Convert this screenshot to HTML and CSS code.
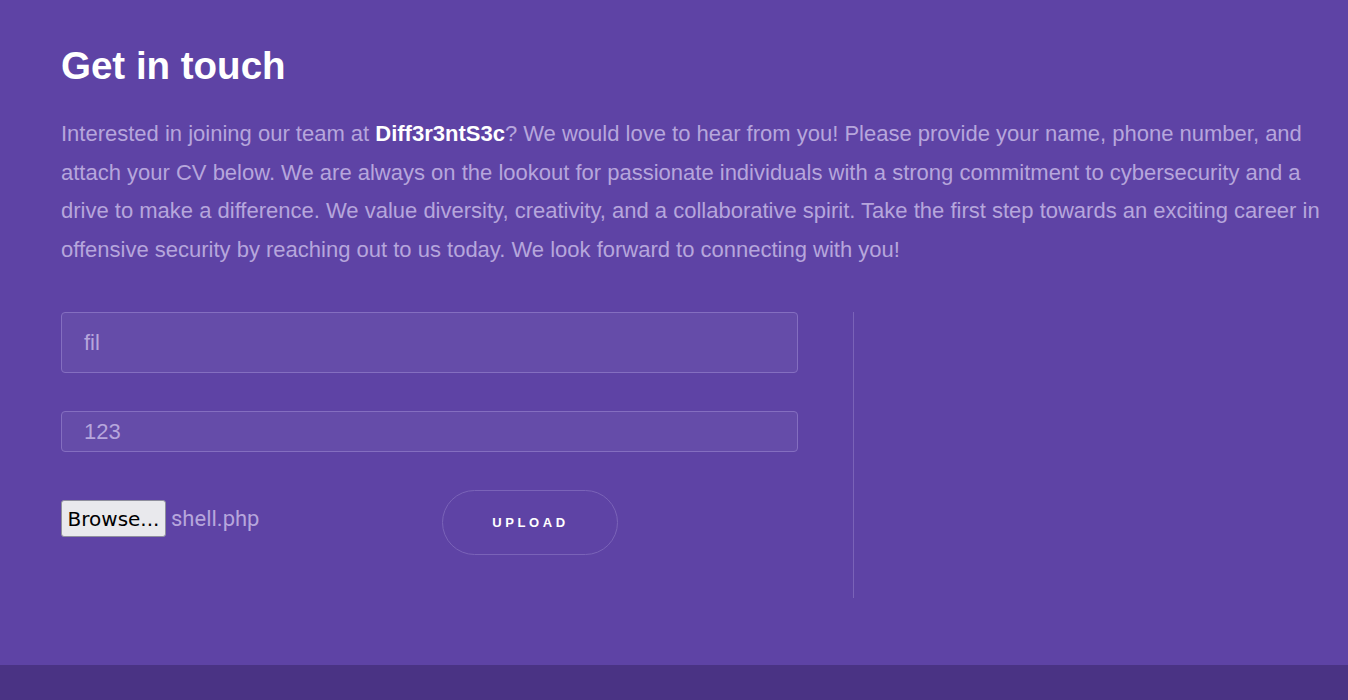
FILE: index.html
```html
<!DOCTYPE html>
<html>
<head>
<meta charset="utf-8">
<link rel="stylesheet" href="styles.css">
</head>
<body>
<section class="contact">
  <h1 class="title">Get in touch</h1>
  <p class="intro">Interested in joining our team at <strong>Diff3r3ntS3c</strong>? We would love to hear from you! Please provide your name, phone number, and attach your CV below. We are always on the lookout for passionate individuals with a strong commitment to cybersecurity and a drive to make a difference. We value diversity, creativity, and a collaborative spirit. Take the first step towards an exciting career in offensive security by reaching out to us today. We look forward to connecting with you!</p>
  <div class="row">
    <form class="form">
      <div class="field field-tall">fil</div>
      <div class="field field-short">123</div>
      <div class="actions">
        <div class="file">
          <span class="browse">Browse...</span>
          <span class="filename">shell.php</span>
        </div>
        <span class="upload">UPLOAD</span>
      </div>
    </form>
    <div class="divider"></div>
  </div>
</section>
<footer class="footer"></footer>
</body>
</html>
```
FILE: styles.css
```css
html, body {
  margin: 0;
  padding: 0;
  background: #5e43a5;
  font-family: "Liberation Sans", Arial, sans-serif;
}
.contact {
  padding: 43px 28px 0 61px;
  height: 622px;
  box-sizing: border-box;
}
.title {
  margin: 0;
  font-size: 38.5px;
  line-height: 46px;
  font-weight: 700;
  color: #ffffff;
}
.intro {
  margin: 26px 0 0 0;
  font-size: 22px;
  line-height: 38.5px;
  color: #b6a6dc;
}
.intro strong {
  color: #ffffff;
  font-weight: 700;
}
.row {
  display: flex;
  margin-top: 43px;
}
.form {
  width: 737px;
  display: flex;
  flex-direction: column;
}
.field {
  box-sizing: border-box;
  background: #654ca9;
  border: 1px solid #846ec0;
  border-radius: 4px;
  padding-left: 22px;
  font-size: 22px;
  color: #b6a6dc;
  display: flex;
  align-items: center;
}
.field-tall {
  height: 61px;
}
.field-short {
  height: 41px;
  margin-top: 38px;
}
.actions {
  display: flex;
  align-items: flex-start;
  margin-top: 38px;
}
.file {
  display: flex;
  align-items: center;
  width: 381px;
  margin-top: 10px;
}
.browse {
  box-sizing: border-box;
  height: 37px;
  width: 105px;
  background: #e9e9ed;
  border: 1px solid #8f8f9d;
  border-radius: 3px;
  font-family: "DejaVu Sans", sans-serif;
  font-size: 20px;
  color: #000000;
  display: flex;
  align-items: center;
  justify-content: center;
}
.filename {
  margin-left: 5px;
  font-size: 22px;
  color: #b6a6dc;
  font-family: "Roboto", "Liberation Sans", sans-serif;
}
.upload {
  box-sizing: border-box;
  width: 176px;
  height: 65px;
  border: 1px solid #7a63b8;
  border-radius: 33px;
  color: #ffffff;
  font-size: 13px;
  font-weight: 700;
  letter-spacing: 3.6px;
  display: flex;
  align-items: center;
  justify-content: center;
  padding-left: 1px;
}
.divider {
  width: 1px;
  height: 286px;
  background: #7a63b8;
  margin-left: 55px;
}
.footer {
  height: 35px;
  background: #4a3384;
  margin-top: 43px;
}
```
